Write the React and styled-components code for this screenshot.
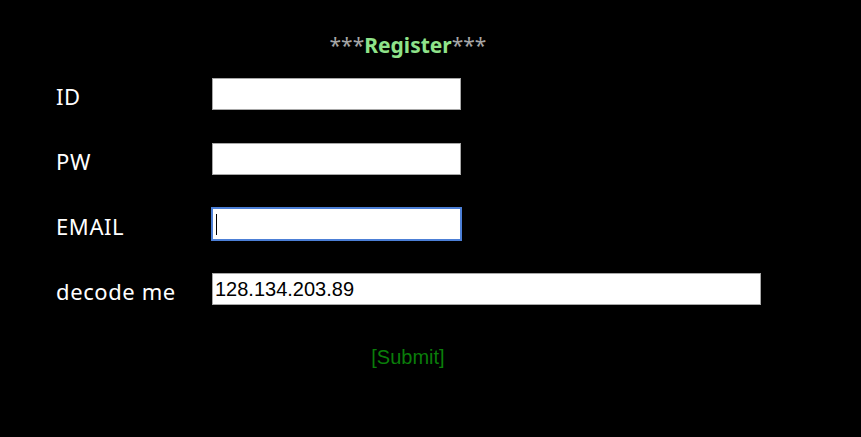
import React from "react"
import styled, { createGlobalStyle } from "styled-components"

const GlobalStyle = createGlobalStyle`
  html, body {
    margin: 0;
    padding: 0;
    background: #000;
  }
  body {
    width: 861px;
    height: 437px;
    overflow: hidden;
    font-family: "Noto Sans", "Open Sans", sans-serif;
    color: #fff;
  }
`

const Form = styled.form`
  width: 720px;
  margin: 0 0 0 48px;
  padding-top: 30px;
`

const Title = styled.h2`
  margin: 0 0 18px;
  text-align: center;
  font-size: 21px;
  font-weight: normal;
  line-height: 30px;
  color: #a6a6a6;

  b {
    color: #8fe38a;
    font-weight: bold;
  }
`

const Rows = styled.div`
  display: grid;
  grid-template-columns: 156px 1fr;
  row-gap: 33px;
  padding-left: 8px;
  align-items: center;
`

const Label = styled.label`
  display: block;
  box-sizing: border-box;
  height: 32px;
  padding-top: 3px;
  font-size: 22px;
  line-height: 30px;
  color: #fff;
  letter-spacing: 0.6px;
`

const FieldWrap = styled.div`
  position: relative;
  width: ${(p) => (p.$wide ? 549 : 249)}px;
  height: 32px;
`

const Input = styled.input`
  box-sizing: border-box;
  width: 100%;
  height: 100%;
  margin: 0;
  padding: 0 2px;
  background: #fff;
  border: 1px solid ${(p) => (p.$focused ? "#4c7fd6" : "#a7a7a7")};
  box-shadow: ${(p) => (p.$focused ? "0 0 0 1px #4c7fd6" : "none")};
  outline: none;
  font-family: "Liberation Sans", Arial, sans-serif;
  font-size: 20px;
  color: #000;
`

const Caret = styled.span`
  position: absolute;
  left: 4px;
  top: 6px;
  width: 1px;
  height: 21px;
  background: #000;
`

const Actions = styled.div`
  display: flex;
  justify-content: center;
  margin-top: 41px;
`

const Submit = styled.button`
  background: none;
  border: 0;
  padding: 0;
  font-family: "Liberation Sans", Arial, sans-serif;
  font-size: 20px;
  color: #0a7d0a;
  cursor: pointer;
`

const fields = [
  { label: "ID", name: "id" },
  { label: "PW", name: "pw", type: "password" },
  { label: "EMAIL", name: "email", focused: true },
  { label: "decode me", name: "decode", wide: true, value: "128.134.203.89" },
]

export default function App() {
  return (
    <>
      <GlobalStyle />
      <Form onSubmit={(e) => e.preventDefault()}>
        <Title>
          ***<b>Register</b>***
        </Title>
        <Rows>
          {fields.map((f) => (
            <React.Fragment key={f.name}>
              <Label htmlFor={f.name}>{f.label}</Label>
              <FieldWrap $wide={f.wide}>
                <Input
                  id={f.name}
                  name={f.name}
                  type={f.type || "text"}
                  defaultValue={f.value}
                  $focused={f.focused}
                />
                {f.focused && <Caret />}
              </FieldWrap>
            </React.Fragment>
          ))}
        </Rows>
        <Actions>
          <Submit type="submit">[Submit]</Submit>
        </Actions>
      </Form>
    </>
  )
}
